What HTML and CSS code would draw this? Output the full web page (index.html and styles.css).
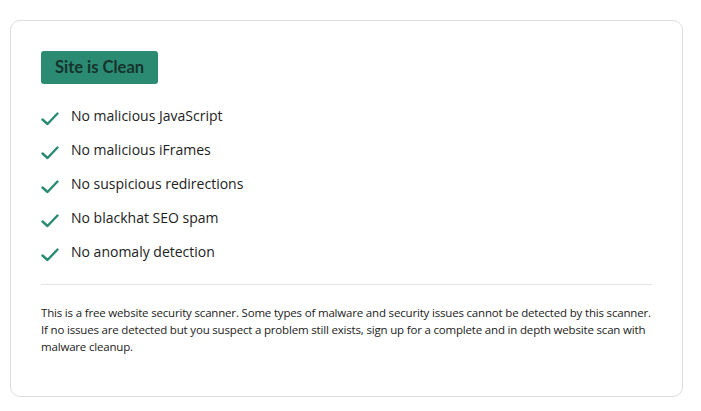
FILE: index.html
```html
<!DOCTYPE html>
<html>
<head>
<meta charset="utf-8">
<link rel="stylesheet" href="styles.css">
</head>
<body>
<div class="card">
  <div class="badge">Site is Clean</div>
  <ul class="checks">
    <li><svg class="tick" viewBox="0 0 18 14" width="18" height="14"><path d="M1.5 7.5 L6.5 12 L16.5 1.5" fill="none" stroke="#2a8a72" stroke-width="2.4" stroke-linecap="round" stroke-linejoin="round"/></svg><span>No malicious JavaScript</span></li>
    <li><svg class="tick" viewBox="0 0 18 14" width="18" height="14"><path d="M1.5 7.5 L6.5 12 L16.5 1.5" fill="none" stroke="#2a8a72" stroke-width="2.4" stroke-linecap="round" stroke-linejoin="round"/></svg><span>No malicious iFrames</span></li>
    <li><svg class="tick" viewBox="0 0 18 14" width="18" height="14"><path d="M1.5 7.5 L6.5 12 L16.5 1.5" fill="none" stroke="#2a8a72" stroke-width="2.4" stroke-linecap="round" stroke-linejoin="round"/></svg><span>No suspicious redirections</span></li>
    <li><svg class="tick" viewBox="0 0 18 14" width="18" height="14"><path d="M1.5 7.5 L6.5 12 L16.5 1.5" fill="none" stroke="#2a8a72" stroke-width="2.4" stroke-linecap="round" stroke-linejoin="round"/></svg><span>No blackhat SEO spam</span></li>
    <li><svg class="tick" viewBox="0 0 18 14" width="18" height="14"><path d="M1.5 7.5 L6.5 12 L16.5 1.5" fill="none" stroke="#2a8a72" stroke-width="2.4" stroke-linecap="round" stroke-linejoin="round"/></svg><span>No anomaly detection</span></li>
  </ul>
  <hr class="divider">
  <p class="note">This is a free website security scanner. Some types of malware and security issues cannot be detected by this scanner. If no issues are detected but you suspect a problem still exists, sign up for a complete and in depth website scan with malware cleanup.</p>
</div>
</body>
</html>
```
FILE: styles.css
```css
html, body {
  margin: 0;
  padding: 0;
  background: #ffffff;
}
body {
  padding: 20px 19px 15px 10px;
  font-family: "Open Sans", "Liberation Sans", sans-serif;
  color: #222;
}
.card {
  box-sizing: border-box;
  width: 673px;
  height: 377px;
  border: 1px solid #dddddd;
  border-radius: 10px;
  padding: 30px 30px 0 30px;
}
.badge {
  display: inline-block;
  background: #2a8a72;
  color: #16332c;
  font-family: "Lato", sans-serif;
  font-weight: 700;
  font-size: 16.5px;
  line-height: 33px;
  height: 33px;
  padding: 0 14px;
  border-radius: 3px;
}
.checks {
  list-style: none;
  margin: 21px 0 0 0;
  padding: 0;
  display: flex;
  flex-direction: column;
  gap: 14px;
}
.checks li {
  display: flex;
  align-items: center;
  height: 20px;
  font-size: 14px;
  color: #222;
}
.tick {
  margin-top: 8px;
  margin-right: 12px;
  flex: none;
}
.divider {
  border: 0;
  border-top: 1px solid #e3e3e3;
  margin: 23px 0 0 0;
  width: 611px;
}
.note {
  margin: 19px 0 0 0;
  font-size: 11.5px;
  line-height: 17px;
  color: #222;
  width: 611px;
  letter-spacing: -0.18px;
}
```
